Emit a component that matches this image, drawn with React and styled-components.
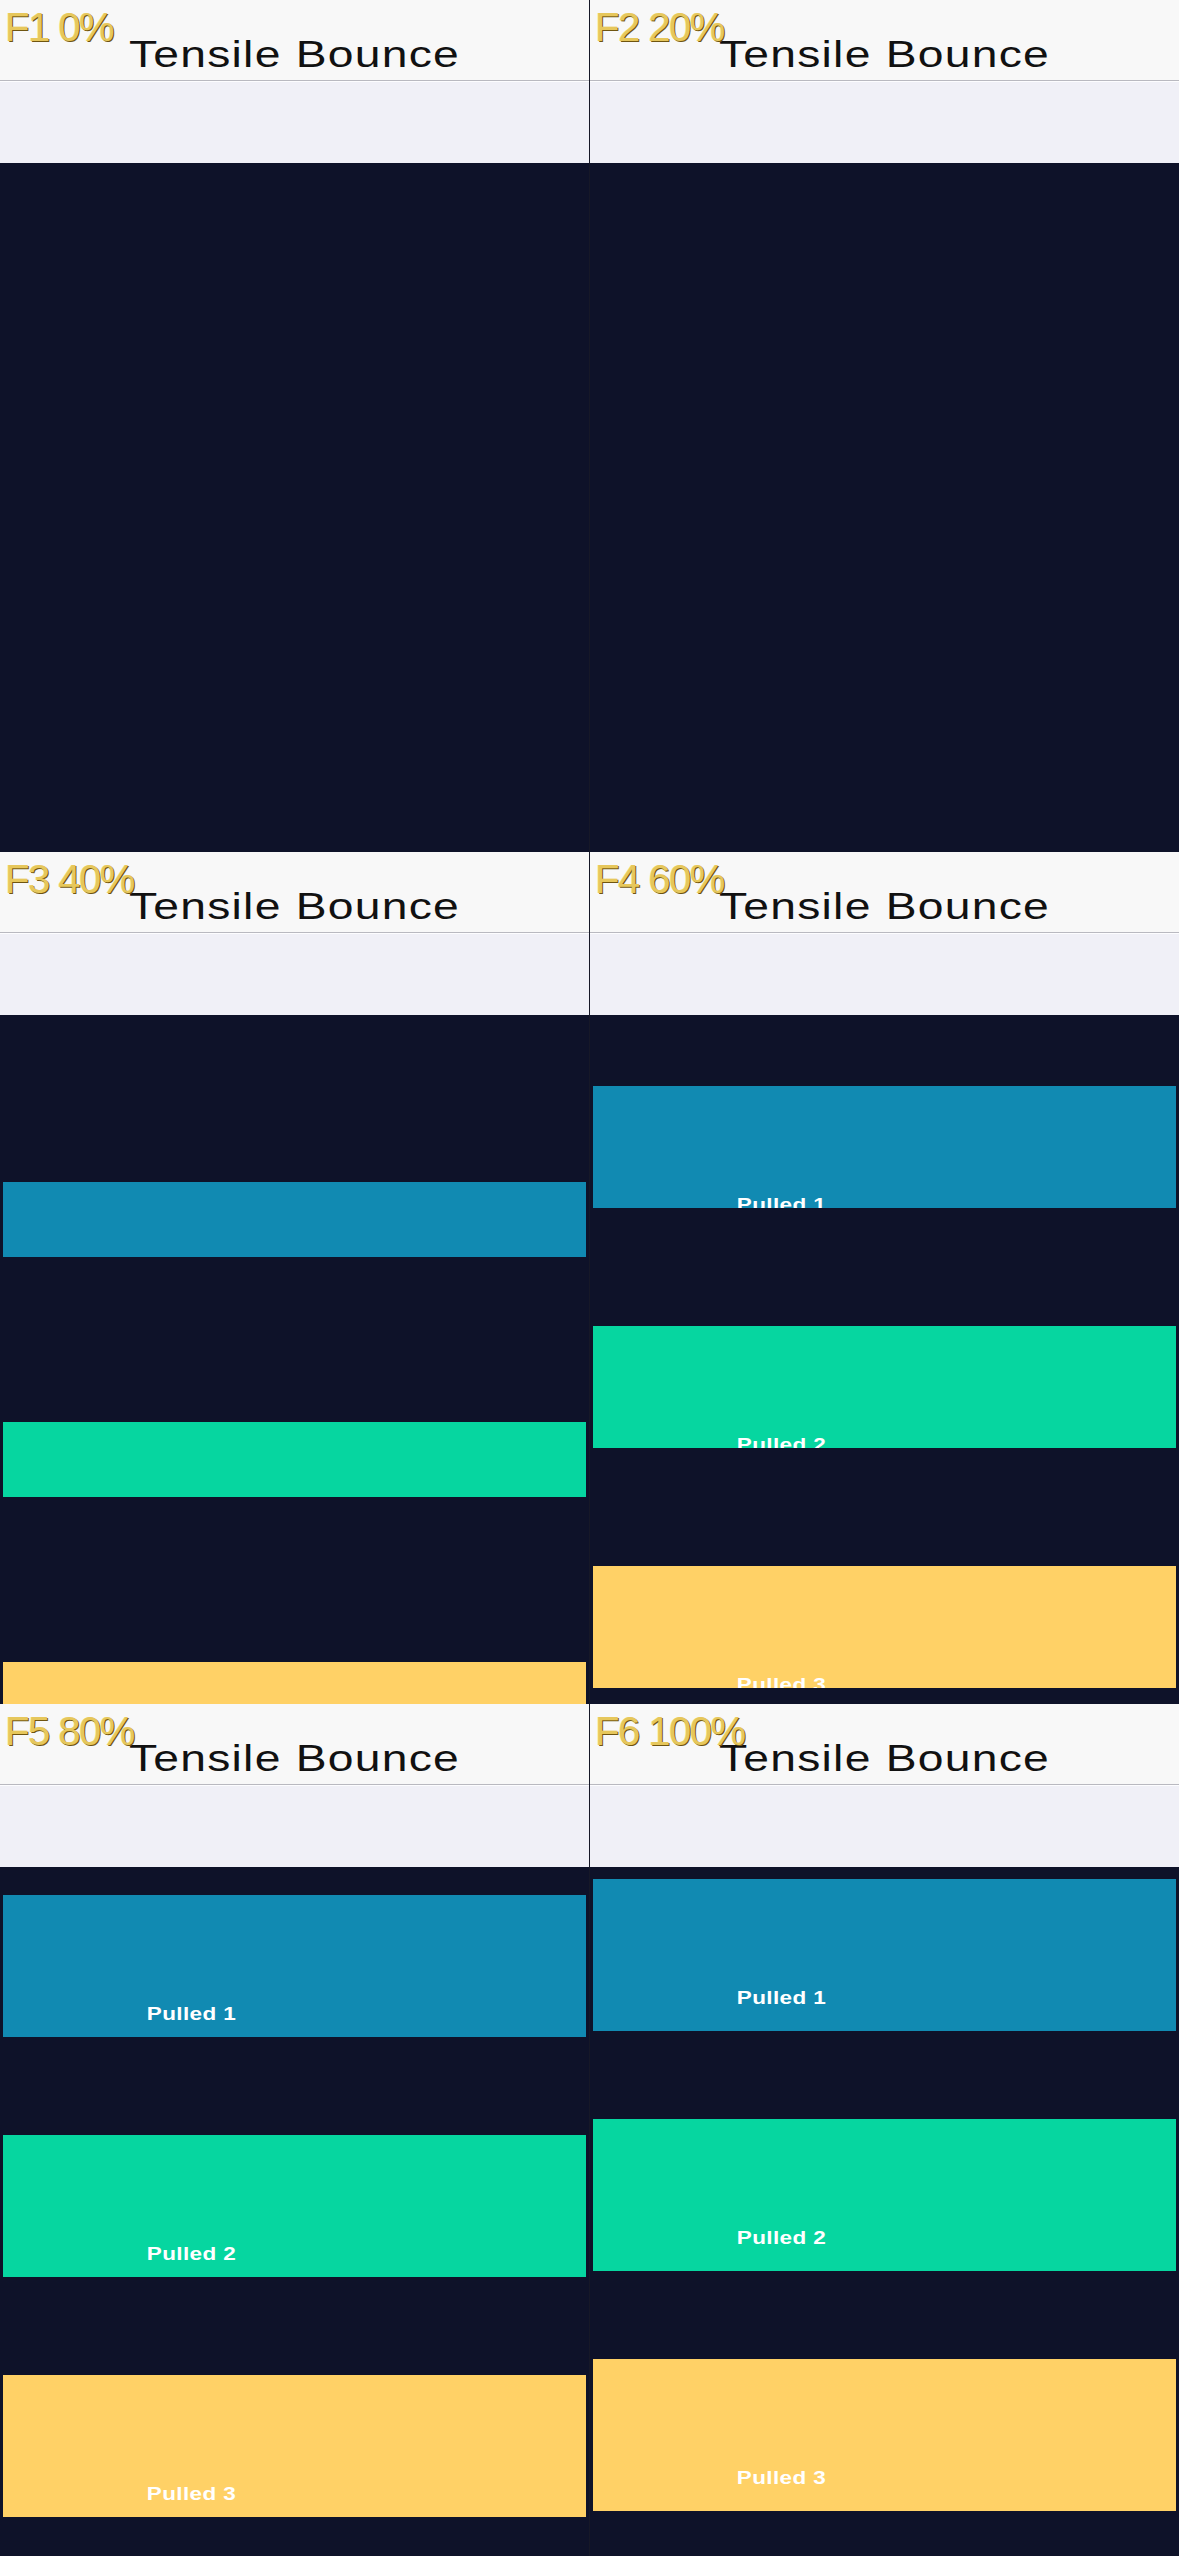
import styled, { createGlobalStyle } from "styled-components";

const GlobalStyle = createGlobalStyle`
    html, body {
        margin: 0;
        padding: 0;
        background: #161827;
    }
    body {
        font-family: "Liberation Sans", Arial, sans-serif;
    }
`;

// bar state per frame: how far the bars sit below their rest spot, and how tall they are
const frames = [
    { id: "F1", pct: 0, offset: 0, height: 0, visible: false },
    { id: "F2", pct: 20, offset: 0, height: 0, visible: false },
    { id: "F3", pct: 40, offset: 155, height: 75, visible: true },
    { id: "F4", pct: 60, offset: 59, height: 122, visible: true },
    { id: "F5", pct: 80, offset: 16, height: 142, visible: true },
    { id: "F6", pct: 100, offset: 0, height: 152, visible: true },
];

const bars = [
    { label: "Pulled 1", color: "#118ab2" },
    { label: "Pulled 2", color: "#06d6a0" },
    { label: "Pulled 3", color: "#ffd166" },
];

export default function App() {
    return (
        <>
            <GlobalStyle />
            <Sheet>
                {frames.map((frame) => (
                    <Frame key={frame.id}>
                        <FrameTag>
                            {frame.id} {frame.pct}%
                        </FrameTag>
                        <Header>
                            <Title>Tensile Bounce</Title>
                        </Header>
                        <Toolbar />
                        <Stage>
                            <BarList $offset={frame.offset} $visible={frame.visible}>
                                {bars.map((bar) => (
                                    <Slot key={bar.label}>
                                        <Bar $color={bar.color} $height={frame.height}>
                                            <BarLabel>{bar.label}</BarLabel>
                                        </Bar>
                                    </Slot>
                                ))}
                            </BarList>
                        </Stage>
                    </Frame>
                ))}
            </Sheet>
        </>
    );
}

const Sheet = styled.div`
    display: grid;
    grid-template-columns: 589px 589px;
    grid-auto-rows: 852px;
    column-gap: 1px;
    width: 1179px;
    background: #161827;
`;

const Frame = styled.section`
    position: relative;
    display: flex;
    flex-direction: column;
    overflow: hidden;
    background: #0e1229;
`;

const FrameTag = styled.span`
    position: absolute;
    top: 7px;
    left: 5px;
    z-index: 2;
    font-family: "Liberation Sans", Arial, sans-serif;
    font-size: 40px;
    line-height: 1;
    letter-spacing: -1.5px;
    color: #e6c75c;
    text-shadow: 1px 1px 0 #6f5510, -0.5px -0.5px 0 #f8e9a8;
`;

const Header = styled.header`
    display: flex;
    justify-content: center;
    align-items: flex-end;
    height: 81px;
    padding-bottom: 7px;
    box-sizing: border-box;
    background: #f8f8f8;
    border-bottom: 1px solid #b9b9c0;
`;

const Title = styled.h1`
    display: inline-block;
    margin: 0;
    font-family: "Liberation Sans", Arial, sans-serif;
    font-size: 37px;
    font-weight: 400;
    line-height: 1;
    letter-spacing: 1px;
    color: #111;
    transform: scaleX(1.25);
`;

const Toolbar = styled.div`
    height: 82px;
    background: #f0f0f7;
    border-top: 1px solid #fdfdff;
    box-sizing: border-box;
`;

const Stage = styled.div`
    flex: 1;
    overflow: hidden;
`;

const BarList = styled.div`
    display: flex;
    flex-direction: column;
    gap: 88px;
    padding: 12px 3px 0;
    transform: translateY(${(p) => p.$offset}px);
    opacity: ${(p) => (p.$visible ? 1 : 0)};
`;

const Slot = styled.div`
    height: 152px;
`;

const Bar = styled.div`
    height: ${(p) => p.$height}px;
    overflow: hidden;
    background: ${(p) => p.$color};
`;

const BarLabel = styled.span`
    display: inline-block;
    padding: 110px 0 0 115px;
    font-family: "Liberation Sans", Arial, sans-serif;
    font-size: 18px;
    font-weight: 700;
    line-height: 1;
    letter-spacing: 0.3px;
    color: #ffffff;
    transform: scaleX(1.25);
    transform-origin: left top;
`;
